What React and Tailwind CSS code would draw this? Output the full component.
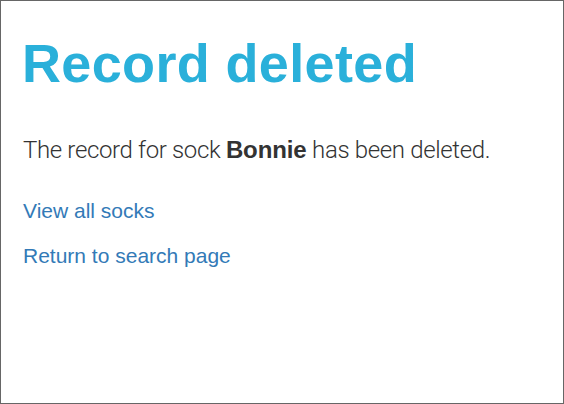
export default function App() {
  return (
    <div className="w-[564px] h-[404px] border border-[#666] bg-white font-['Liberation_Sans',Arial,sans-serif] text-[#333]">
      <div className="px-[22px]">
        <h1 className="mt-[33px] ml-[-1px] text-[54px] leading-[59px] font-bold tracking-[0.35px] text-[#2ab0da]">Record deleted</h1>
        <p className="mt-[40px] text-[24px] leading-[34px] font-light font-['Roboto',sans-serif] tracking-[-0.35px]">
          The record for sock <strong className="font-bold font-['Liberation_Sans',Arial,sans-serif] tracking-[-0.1px]">Bonnie</strong> has been deleted.
        </p>
        <div className="mt-[29px] text-[21px] leading-[29px]">
          <a href="#" className="text-[#337ab7]">View all socks</a>
        </div>
        <div className="mt-[16px] text-[21px] leading-[29px]">
          <a href="#" className="text-[#337ab7]">Return to search page</a>
        </div>
      </div>
    </div>
  );
}
